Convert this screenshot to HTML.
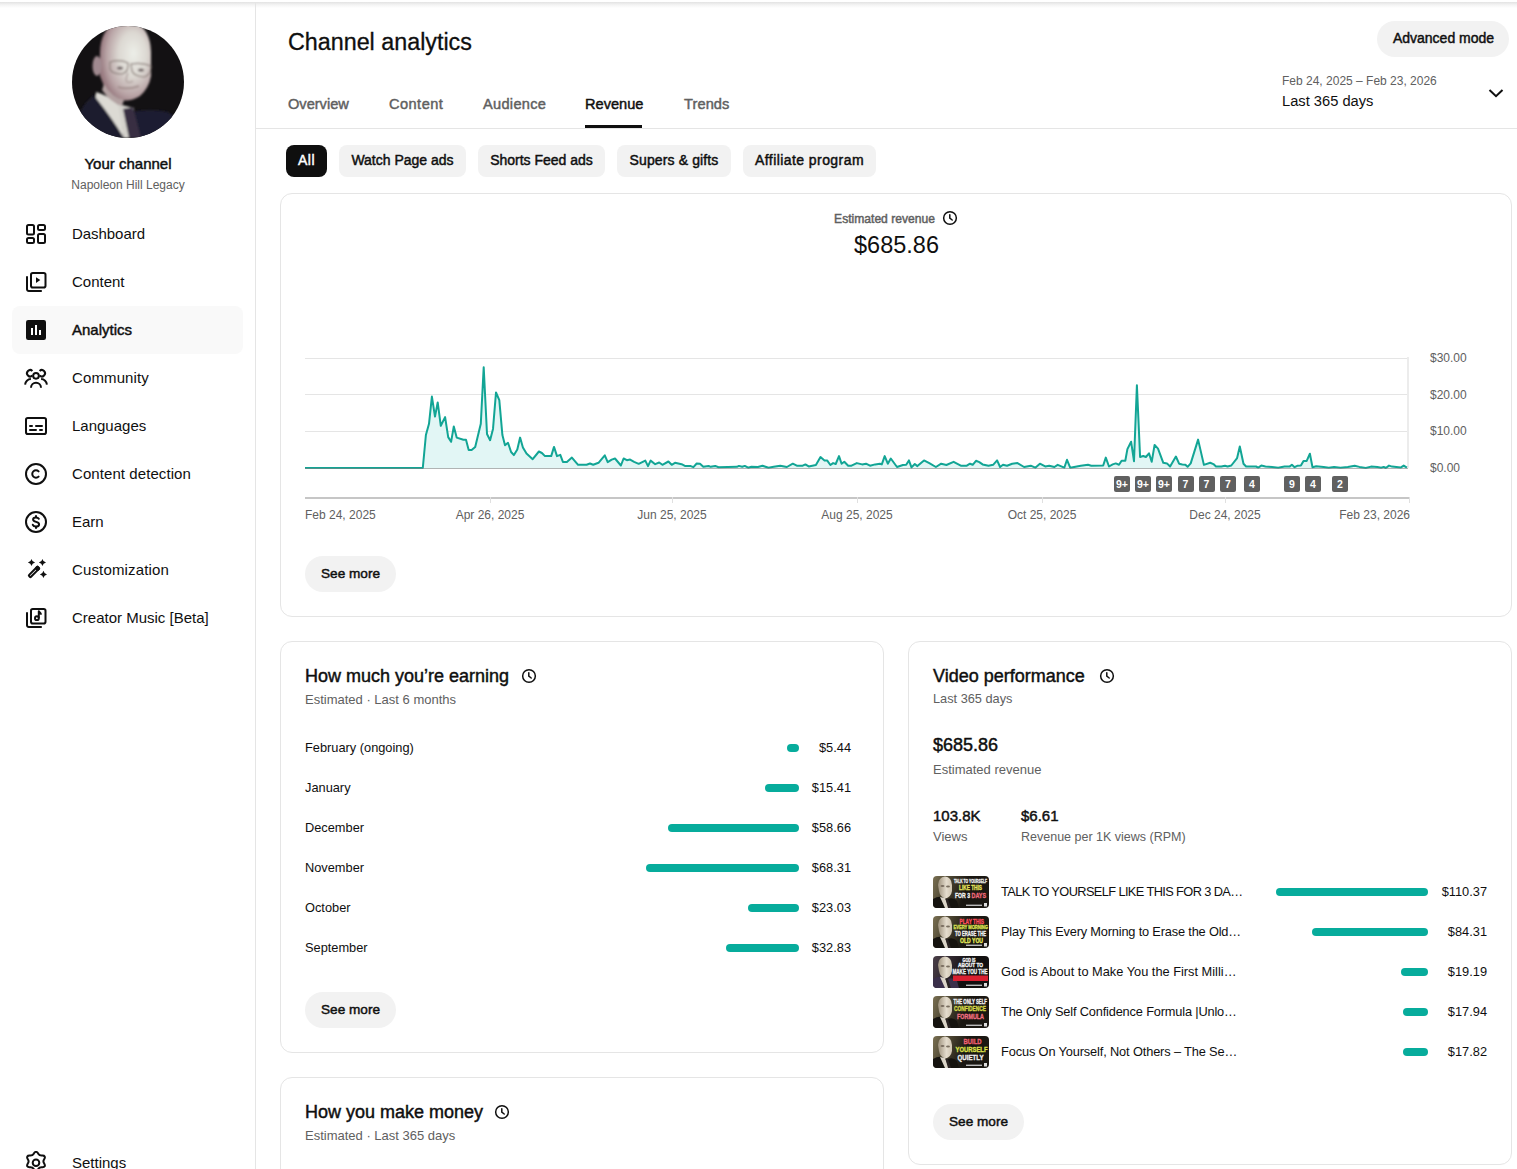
<!DOCTYPE html>
<html><head><meta charset="utf-8">
<style>
html,body{margin:0;padding:0;background:#fff;}
body{width:1517px;height:1169px;overflow:hidden;position:relative;font-family:"Liberation Sans",sans-serif;color:#0f0f0f;}
.t{position:absolute;white-space:nowrap;line-height:1;font-variant-ligatures:none;}
.ic{position:absolute;display:block;}
.abs{position:absolute;}
.card{position:absolute;border:1px solid #e5e5e5;border-radius:12px;box-sizing:border-box;background:#fff;}
.pill{position:absolute;background:#f2f2f2;border-radius:18px;}
.chip{position:absolute;background:#f2f2f2;border-radius:8px;height:32px;top:145px;}
.bar{position:absolute;height:8px;border-radius:4px;background:#07ac9c;}
.mk{position:absolute;top:475.5px;width:16px;height:16px;border-radius:2px;background:#606060;color:#fff;font-size:10.5px;font-weight:700;line-height:16px;text-align:center;}
</style></head><body>
<div class="abs" style="left:0;top:2px;width:1517px;height:6px;background:linear-gradient(#e2e2e2,#f3f3f3 45%,rgba(255,255,255,0))"></div>
<div class="abs" style="left:255px;top:2px;width:1px;height:1167px;background:#e5e5e5"></div>
<svg class="ic" style="left:72px;top:26px" width="112" height="112" viewBox="0 0 112 112">
<defs><clipPath id="av"><circle cx="56" cy="56" r="56"/></clipPath>
<radialGradient id="skin" cx="0.62" cy="0.45" r="0.62" fx="0.66" fy="0.4"><stop offset="0" stop-color="#eceee8"/><stop offset="0.45" stop-color="#dcd8d2"/><stop offset="0.8" stop-color="#b9a4a6"/><stop offset="1" stop-color="#97797f"/></radialGradient>
<filter id="bl" x="-0.2" y="-0.2" width="1.4" height="1.4"><feGaussianBlur stdDeviation="0.9"/></filter>
</defs>
<g clip-path="url(#av)">
<rect width="112" height="112" fill="#131113"/>
<g filter="url(#bl)">
<path d="M4 112 L8 86 Q14 74 24 68 L34 70 L56 112Z" fill="#1e1d2e"/>
<path d="M60 86 Q78 82 96 86 L112 98 L112 112 L56 112Z" fill="#1f1e30"/>
<path d="M24 66 Q34 68 48 80 L52 112 Q40 92 24 72Z" fill="#dcdad4"/>
<path d="M46 78 L62 82 L58 112 L52 112Z" fill="#d4d2cc"/>
<path d="M51 83 L61 81 L69 112 L57 112Z" fill="#382f42"/>
<path d="M28 26 Q29 -3 53 -5 Q78 -4 79 26 L79 50 Q77 62 68 70 Q58 76 50 74 Q38 70 32 60 L28 50Z" fill="url(#skin)"/>
<ellipse cx="25" cy="40" rx="4.5" ry="10" fill="#a08a90"/>
<path d="M38 36 Q48 33 56 37 Q57 46 50 48 Q40 48 38 43Z M59 38 Q70 36 79 40 Q79 49 72 51 Q62 50 60 45Z" fill="none" stroke="#8a7d78" stroke-width="1.2"/>
<ellipse cx="48" cy="42" rx="3" ry="1.5" fill="#6b5e60"/><ellipse cx="69" cy="44" rx="3" ry="1.5" fill="#6b5e60"/>
<path d="M56 47 Q53 54 55 56 Q58 57 61 55" fill="none" stroke="#a89896" stroke-width="1.2"/>
<path d="M46 61 Q56 64 67 60" fill="none" stroke="#9a8684" stroke-width="1.5"/>
<path d="M32 58 Q40 72 52 74 L50 80 Q38 76 30 64Z" fill="#b3a2a2"/>
</g>
</g></svg>
<div class="t" style="left:-172px;width:600px;text-align:center;top:156.00px;font-size:15px;font-weight:400;-webkit-text-stroke:0.45px #0f0f0f;color:#0f0f0f;">Your channel</div>
<div class="t" style="left:-172px;width:600px;text-align:center;top:179.34px;font-size:12px;font-weight:400;color:#606060;">Napoleon Hill Legacy</div>
<div class="abs" style="left:12px;top:306px;width:231px;height:48px;border-radius:8px;background:#f9f9f9"></div>
<svg class="ic" style="left:24px;top:222px" width="24" height="24" viewBox="0 0 24 24" fill="none" stroke="#0f0f0f" stroke-width="2"><rect x="3" y="3" width="7" height="9.5" rx="1.5"/><rect x="14" y="3" width="7" height="5" rx="1.5"/><rect x="3" y="16" width="7" height="5" rx="1.5"/><rect x="14" y="12" width="7" height="9" rx="1.5"/></svg>
<div class="t" style="left:72px;top:226.30px;font-size:15px;font-weight:400;color:#0f0f0f;letter-spacing:-0.05px;">Dashboard</div>
<svg class="ic" style="left:24px;top:270px" width="24" height="24" viewBox="0 0 24 24" fill="none" stroke="#0f0f0f" stroke-width="2"><rect x="7" y="3" width="14.5" height="14.5" rx="1.8"/><path d="M3 6.2V19.2a1.8 1.8 0 0 0 1.8 1.8H17.8"/><path d="M12 7.2L16.3 10.1L12 13Z" fill="#0f0f0f" stroke="none"/></svg>
<div class="t" style="left:72px;top:274.30px;font-size:15px;font-weight:400;color:#0f0f0f;letter-spacing:0px;">Content</div>
<svg class="ic" style="left:24px;top:318px" width="24" height="24" viewBox="0 0 24 24" fill="none" stroke="#0f0f0f" stroke-width="2"><rect x="2" y="2" width="20" height="20" rx="2.2" fill="#0f0f0f" stroke="none"/><rect x="7" y="10" width="2" height="7" fill="#fff" stroke="none"/><rect x="11" y="7" width="2" height="10" fill="#fff" stroke="none"/><rect x="15" y="12" width="2" height="5" fill="#fff" stroke="none"/></svg>
<div class="t" style="left:72px;top:322.30px;font-size:15px;font-weight:400;-webkit-text-stroke:0.45px #0f0f0f;color:#0f0f0f;letter-spacing:0px;">Analytics</div>
<svg class="ic" style="left:24px;top:366px" width="24" height="24" viewBox="0 0 24 24" fill="none" stroke="#0f0f0f" stroke-width="2"><circle cx="12" cy="9.8" r="2.85"/><path d="M7 21.8a5 5 0 0 1 10 0"/><path d="M8.4 4.9A3.2 3.2 0 1 0 8.4 9.6"/><path d="M15.6 4.9A3.2 3.2 0 1 1 15.6 9.6"/><path d="M1.1 18.6a5.8 5.8 0 0 1 5.8 -5.5"/><path d="M22.9 18.6a5.8 5.8 0 0 0 -5.8 -5.5"/></svg>
<div class="t" style="left:72px;top:370.30px;font-size:15px;font-weight:400;color:#0f0f0f;letter-spacing:0.12px;">Community</div>
<svg class="ic" style="left:24px;top:414px" width="24" height="24" viewBox="0 0 24 24" fill="none" stroke="#0f0f0f" stroke-width="2"><rect x="2" y="4" width="20" height="16" rx="1.8"/><path d="M6 12H8M12 12H18M6 16H12M16 16H18" stroke-linecap="round"/></svg>
<div class="t" style="left:72px;top:418.30px;font-size:15px;font-weight:400;color:#0f0f0f;letter-spacing:0px;">Languages</div>
<svg class="ic" style="left:24px;top:462px" width="24" height="24" viewBox="0 0 24 24" fill="none" stroke="#0f0f0f" stroke-width="2"><circle cx="12" cy="12" r="10"/><path d="M14.6 9.4a3.7 3.7 0 1 0 0 5.2" stroke-linecap="round"/></svg>
<div class="t" style="left:72px;top:466.30px;font-size:15px;font-weight:400;color:#0f0f0f;letter-spacing:0.08px;">Content detection</div>
<svg class="ic" style="left:24px;top:510px" width="24" height="24" viewBox="0 0 24 24" fill="none" stroke="#0f0f0f" stroke-width="2"><circle cx="12" cy="12" r="10"/><path d="M12 5.2V7.5M12 16.6V18.8" /><path d="M14.8 8.8c-0.5-0.9-1.6-1.4-2.9-1.4c-1.7 0-2.8 0.9-2.8 2.2c0 3 6 1.6 6 4.6c0 1.4-1.3 2.4-3.1 2.4c-1.5 0-2.8-0.7-3.2-1.8" stroke-linecap="round"/></svg>
<div class="t" style="left:72px;top:514.30px;font-size:15px;font-weight:400;color:#0f0f0f;letter-spacing:0px;">Earn</div>
<svg class="ic" style="left:24px;top:558px" width="24" height="24" viewBox="0 0 24 24" fill="none" stroke="#0f0f0f" stroke-width="2"><path d="M7.5 0.9000000000000004Q8.07 3.8800000000000003 11.05 4.45Q8.07 5.0200000000000005 7.5 8.0Q6.93 5.0200000000000005 3.95 4.45Q6.93 3.8800000000000003 7.5 0.9000000000000004ZM18.45 0.9000000000000004Q19.02 3.8800000000000003 22.0 4.45Q19.02 5.0200000000000005 18.45 8.0Q17.88 5.0200000000000005 14.899999999999999 4.45Q17.88 3.8800000000000003 18.45 0.9000000000000004ZM19.45 12.849999999999998Q20.02 15.829999999999998 23.0 16.4Q20.02 16.97 19.45 19.95Q18.88 16.97 15.899999999999999 16.4Q18.88 15.829999999999998 19.45 12.849999999999998Z" fill="#0f0f0f" stroke="none"/><g transform="translate(9.9 14) rotate(-45)"><rect x="-6.3" y="-1.35" width="12.6" height="2.7" rx="0.9"/><rect x="3" y="-2.3" width="4.35" height="4.6" rx="1.2" fill="#0f0f0f" stroke="none"/></g></svg>
<div class="t" style="left:72px;top:562.30px;font-size:15px;font-weight:400;color:#0f0f0f;letter-spacing:0.15px;">Customization</div>
<svg class="ic" style="left:24px;top:606px" width="24" height="24" viewBox="0 0 24 24" fill="none" stroke="#0f0f0f" stroke-width="2"><rect x="7" y="3" width="14.5" height="14.5" rx="1.8"/><path d="M3 6.2V19.2a1.8 1.8 0 0 0 1.8 1.8H17.8"/><circle cx="12.9" cy="12.2" r="1.9"/><path d="M14.8 12.2V5.3c0.6 0.6 2 1.4 2.3 3.3" stroke-linejoin="round"/></svg>
<div class="t" style="left:72px;top:610.30px;font-size:15px;font-weight:400;color:#0f0f0f;letter-spacing:0px;">Creator Music [Beta]</div>
<svg class="ic" style="left:24px;top:1151px" width="24" height="24" viewBox="0 0 24 24" fill="none" stroke="#0f0f0f" stroke-width="2"><g transform="translate(12 11.7) scale(1.1) translate(-12 -11.7)" stroke-width="1.82"><path d="M12 1.8c1.2 0 1.6 1 2.2 2c0.6 1 1.6 1.4 2.8 1.4c1.2 0 2.3-0.3 2.9 0.8c0.6 1 -0.1 2-0.7 3c-0.6 1-0.6 2 0 3c0.6 1 1.3 2 0.7 3c-0.6 1.1-1.7 0.8-2.9 0.8c-1.2 0-2.2 0.4-2.8 1.4c-0.6 1-1 2-2.2 2c-1.2 0-1.6-1-2.2-2c-0.6-1-1.6-1.4-2.8-1.4c-1.2 0-2.3 0.3-2.9-0.8c-0.6-1 0.1-2 0.7-3c0.6-1 0.6-2 0-3c-0.6-1-1.3-2-0.7-3c0.6-1.1 1.7-0.8 2.9-0.8c1.2 0 2.2-0.4 2.8-1.4c0.6-1 1-2 2.2-2Z" stroke-linejoin="round"/><circle cx="12" cy="11.7" r="3"/></g></svg>
<div class="t" style="left:72px;top:1155.00px;font-size:15px;font-weight:400;color:#0f0f0f;">Settings</div>
<div class="t" style="left:288px;top:31.28px;font-size:23.3px;font-weight:400;color:#0f0f0f;-webkit-text-stroke:0.3px #0f0f0f;">Channel analytics</div>
<div class="t" style="left:288px;top:96.94px;font-size:14.6px;font-weight:400;-webkit-text-stroke:0.45px #606060;color:#606060;letter-spacing:0px;">Overview</div>
<div class="t" style="left:389px;top:96.94px;font-size:14.6px;font-weight:400;-webkit-text-stroke:0.45px #606060;color:#606060;letter-spacing:0.45px;">Content</div>
<div class="t" style="left:483px;top:96.94px;font-size:14.6px;font-weight:400;-webkit-text-stroke:0.45px #606060;color:#606060;letter-spacing:0.3px;">Audience</div>
<div class="t" style="left:585px;top:96.94px;font-size:14.6px;font-weight:400;-webkit-text-stroke:0.45px #0f0f0f;color:#0f0f0f;letter-spacing:0px;">Revenue</div>
<div class="t" style="left:684px;top:96.94px;font-size:14.6px;font-weight:400;-webkit-text-stroke:0.45px #606060;color:#606060;letter-spacing:0.1px;">Trends</div>
<div class="abs" style="left:585px;top:125px;width:57px;height:3px;background:#0f0f0f"></div>
<div class="abs" style="left:256px;top:128px;width:1261px;height:1px;background:#e5e5e5"></div>
<div class="pill" style="left:1377px;top:21px;width:132px;height:36px"></div>
<div class="t" style="left:1143.5px;width:600px;text-align:center;top:30.85px;font-size:14px;font-weight:400;-webkit-text-stroke:0.45px #0f0f0f;color:#0f0f0f;">Advanced mode</div>
<div class="t" style="left:1282px;top:74.54px;font-size:12px;font-weight:400;color:#606060;">Feb 24, 2025 – Feb 23, 2026</div>
<div class="t" style="left:1282px;top:93.76px;font-size:14.7px;font-weight:400;color:#0f0f0f;">Last 365 days</div>
<svg class="ic" style="left:1484px;top:81px" width="24" height="24" viewBox="0 0 24 24" fill="none" stroke="#0f0f0f" stroke-width="2"><path d="M5.5 9L12 15.2L18.5 9"/></svg>
<div class="chip" style="left:286px;width:41px;background:#0f0f0f"></div>
<div class="t" style="left:6.5px;width:600px;text-align:center;top:153.05px;font-size:14px;font-weight:400;-webkit-text-stroke:0.45px #fff;color:#fff;letter-spacing:0.5px;">All</div>
<div class="chip" style="left:339px;width:127px;background:#f2f2f2"></div>
<div class="t" style="left:102.5px;width:600px;text-align:center;top:153.05px;font-size:14px;font-weight:400;-webkit-text-stroke:0.45px #0f0f0f;color:#0f0f0f;letter-spacing:0px;">Watch Page ads</div>
<div class="chip" style="left:478px;width:127px;background:#f2f2f2"></div>
<div class="t" style="left:241.5px;width:600px;text-align:center;top:153.05px;font-size:14px;font-weight:400;-webkit-text-stroke:0.45px #0f0f0f;color:#0f0f0f;letter-spacing:0px;">Shorts Feed ads</div>
<div class="chip" style="left:617px;width:114px;background:#f2f2f2"></div>
<div class="t" style="left:374.0px;width:600px;text-align:center;top:153.05px;font-size:14px;font-weight:400;-webkit-text-stroke:0.45px #0f0f0f;color:#0f0f0f;letter-spacing:0.13px;">Supers &amp; gifts</div>
<div class="chip" style="left:743px;width:133px;background:#f2f2f2"></div>
<div class="t" style="left:509.5px;width:600px;text-align:center;top:153.05px;font-size:14px;font-weight:400;-webkit-text-stroke:0.45px #0f0f0f;color:#0f0f0f;letter-spacing:0.43px;">Affiliate program</div>
<div class="card" style="left:280px;top:193px;width:1232px;height:424px"></div>
<div class="t" style="left:584.5px;width:600px;text-align:center;top:212.56px;font-size:12.1px;font-weight:400;-webkit-text-stroke:0.45px #606060;color:#606060;">Estimated revenue</div>
<svg class="ic" style="left:942px;top:210.1px" width="16" height="16" viewBox="0 0 16 16" fill="none" stroke="#0f0f0f" stroke-width="1.5"><circle cx="8" cy="8" r="6.35"/><path d="M7.8 4.7V8.2L10.2 10" stroke-linecap="round"/></svg>
<div class="t" style="left:596.5px;width:600px;text-align:center;top:233.81px;font-size:23.5px;font-weight:400;color:#0f0f0f;">$685.86</div>
<div class="abs" style="left:305px;top:358px;width:1103px;height:1px;background:#e5e5e5"></div>
<div class="abs" style="left:305px;top:394px;width:1103px;height:1px;background:#e5e5e5"></div>
<div class="abs" style="left:305px;top:431px;width:1103px;height:1px;background:#e5e5e5"></div>
<div class="abs" style="left:1407px;top:357px;width:2px;height:111px;background:#ececec"></div>
<svg class="ic" style="left:0;top:0" width="1517" height="520" viewBox="0 0 1517 520"><path d="M305.0 468.0 L422.8 468.0 L425.9 435.0 L429.0 423.8 L431.9 396.6 L435.0 416.6 L437.7 402.4 L440.8 425.8 L445.1 417.1 L448.2 437.1 L451.1 441.8 L453.8 426.4 L456.7 437.6 L463.4 439.7 L466.0 439.7 L468.7 450.0 L471.6 450.0 L475.2 446.9 L480.8 423.8 L483.7 367.3 L487.0 434.0 L490.1 440.2 L493.0 428.9 L496.0 392.5 L499.3 400.2 L502.4 435.1 L505.0 445.3 L508.0 442.8 L511.1 452.0 L513.9 455.1 L517.3 449.5 L520.1 437.6 L522.9 447.4 L526.5 453.6 L532.7 459.2 L538.9 451.5 L541.9 453.0 L545.0 456.1 L551.2 456.1 L554.0 446.9 L557.0 456.1 L560.3 454.9 L562.9 461.9 L566.9 461.9 L571.9 457.6 L578.1 464.8 L586.6 464.8 L590.0 463.5 L593.2 464.8 L598.5 462.8 L604.8 455.3 L607.7 462.2 L611.7 459.6 L615.0 458.5 L620.9 465.5 L623.6 458.5 L626.9 460.2 L630.1 459.6 L634.1 461.9 L638.7 463.8 L645.3 460.6 L648.0 466.1 L650.6 460.6 L655.2 464.2 L659.2 462.5 L662.4 464.8 L668.4 461.5 L671.7 464.8 L675.0 462.8 L681.6 464.2 L684.9 465.9 L690.8 466.1 L693.4 467.2 L696.7 463.5 L700.0 463.8 L703.3 466.8 L708.6 465.9 L710.6 466.8 L715.2 465.9 L718.5 467.2 L736.9 466.8 L738.9 465.9 L742.2 466.8 L744.8 465.9 L748.1 467.7 L751.4 466.8 L757.9 467.0 L762.5 465.7 L768.5 467.7 L773.7 466.8 L780.3 465.7 L786.9 467.0 L792.8 463.7 L796.8 465.7 L802.7 465.7 L805.4 464.4 L808.7 466.4 L815.9 465.0 L820.5 457.1 L824.5 460.4 L827.1 460.4 L830.4 465.0 L833.1 463.1 L835.7 464.0 L839.0 456.1 L841.6 463.7 L844.3 461.8 L848.2 465.7 L851.5 465.7 L856.8 463.1 L862.1 464.4 L866.0 463.7 L870.0 465.7 L875.2 464.4 L879.9 463.7 L881.8 464.4 L884.7 456.1 L887.8 463.7 L890.8 458.5 L897.0 467.0 L902.9 465.0 L906.2 464.8 L908.9 460.4 L911.5 467.4 L914.8 464.0 L917.4 466.1 L924.0 460.4 L929.3 463.1 L935.9 467.0 L941.2 463.7 L946.4 465.0 L953.6 461.8 L960.8 465.7 L966.8 465.7 L970.0 463.7 L972.7 464.8 L976.0 460.8 L979.3 462.1 L982.6 464.4 L988.5 465.7 L993.1 464.8 L997.1 460.4 L1000.1 467.0 L1003.0 464.8 L1007.0 465.7 L1012.2 463.7 L1017.5 463.1 L1024.1 467.0 L1030.7 465.7 L1035.3 467.7 L1039.9 463.7 L1045.2 466.4 L1049.2 465.7 L1054.4 467.0 L1057.7 464.8 L1064.3 467.7 L1067.0 459.8 L1070.2 467.7 L1076.8 466.4 L1080.8 465.7 L1088.0 464.8 L1091.3 465.7 L1103.2 465.5 L1105.8 457.6 L1109.0 466.5 L1112.7 464.4 L1115.8 463.4 L1119.0 464.7 L1121.6 460.7 L1125.3 460.7 L1127.4 449.1 L1131.1 441.7 L1134.0 461.2 L1136.9 385.3 L1140.1 457.0 L1143.2 456.0 L1145.9 457.0 L1149.0 453.3 L1151.7 461.8 L1154.6 444.9 L1158.0 448.6 L1163.3 462.8 L1167.0 463.4 L1170.1 466.5 L1175.9 456.5 L1179.1 463.7 L1182.3 464.4 L1185.4 464.7 L1187.6 466.8 L1190.7 463.4 L1198.1 439.6 L1203.9 464.9 L1210.2 462.8 L1213.4 464.1 L1216.0 466.5 L1221.3 466.5 L1225.0 465.8 L1227.6 466.5 L1231.3 465.5 L1237.1 458.1 L1239.8 446.5 L1243.5 463.7 L1246.1 466.5 L1256.1 466.5 L1258.2 467.6 L1261.3 465.6 L1265.5 466.4 L1271.9 466.9 L1278.2 467.7 L1284.5 466.6 L1289.8 466.4 L1291.9 464.8 L1294.6 467.2 L1297.2 465.8 L1300.9 465.6 L1303.5 460.9 L1306.7 460.9 L1309.9 453.7 L1312.5 467.2 L1316.2 466.2 L1323.6 466.9 L1328.8 467.7 L1334.1 466.9 L1340.4 467.7 L1347.8 466.9 L1354.7 465.8 L1359.4 466.9 L1365.8 468.0 L1371.0 466.6 L1377.4 466.9 L1381.1 467.7 L1383.7 466.9 L1385.8 468.0 L1389.0 465.6 L1392.1 466.6 L1400.6 467.6 L1403.7 465.6 L1406.9 467.6 L1406.9 468 L305 468 Z" fill="#e2f6f5"/><path d="M305.0 468.0 L422.8 468.0 L425.9 435.0 L429.0 423.8 L431.9 396.6 L435.0 416.6 L437.7 402.4 L440.8 425.8 L445.1 417.1 L448.2 437.1 L451.1 441.8 L453.8 426.4 L456.7 437.6 L463.4 439.7 L466.0 439.7 L468.7 450.0 L471.6 450.0 L475.2 446.9 L480.8 423.8 L483.7 367.3 L487.0 434.0 L490.1 440.2 L493.0 428.9 L496.0 392.5 L499.3 400.2 L502.4 435.1 L505.0 445.3 L508.0 442.8 L511.1 452.0 L513.9 455.1 L517.3 449.5 L520.1 437.6 L522.9 447.4 L526.5 453.6 L532.7 459.2 L538.9 451.5 L541.9 453.0 L545.0 456.1 L551.2 456.1 L554.0 446.9 L557.0 456.1 L560.3 454.9 L562.9 461.9 L566.9 461.9 L571.9 457.6 L578.1 464.8 L586.6 464.8 L590.0 463.5 L593.2 464.8 L598.5 462.8 L604.8 455.3 L607.7 462.2 L611.7 459.6 L615.0 458.5 L620.9 465.5 L623.6 458.5 L626.9 460.2 L630.1 459.6 L634.1 461.9 L638.7 463.8 L645.3 460.6 L648.0 466.1 L650.6 460.6 L655.2 464.2 L659.2 462.5 L662.4 464.8 L668.4 461.5 L671.7 464.8 L675.0 462.8 L681.6 464.2 L684.9 465.9 L690.8 466.1 L693.4 467.2 L696.7 463.5 L700.0 463.8 L703.3 466.8 L708.6 465.9 L710.6 466.8 L715.2 465.9 L718.5 467.2 L736.9 466.8 L738.9 465.9 L742.2 466.8 L744.8 465.9 L748.1 467.7 L751.4 466.8 L757.9 467.0 L762.5 465.7 L768.5 467.7 L773.7 466.8 L780.3 465.7 L786.9 467.0 L792.8 463.7 L796.8 465.7 L802.7 465.7 L805.4 464.4 L808.7 466.4 L815.9 465.0 L820.5 457.1 L824.5 460.4 L827.1 460.4 L830.4 465.0 L833.1 463.1 L835.7 464.0 L839.0 456.1 L841.6 463.7 L844.3 461.8 L848.2 465.7 L851.5 465.7 L856.8 463.1 L862.1 464.4 L866.0 463.7 L870.0 465.7 L875.2 464.4 L879.9 463.7 L881.8 464.4 L884.7 456.1 L887.8 463.7 L890.8 458.5 L897.0 467.0 L902.9 465.0 L906.2 464.8 L908.9 460.4 L911.5 467.4 L914.8 464.0 L917.4 466.1 L924.0 460.4 L929.3 463.1 L935.9 467.0 L941.2 463.7 L946.4 465.0 L953.6 461.8 L960.8 465.7 L966.8 465.7 L970.0 463.7 L972.7 464.8 L976.0 460.8 L979.3 462.1 L982.6 464.4 L988.5 465.7 L993.1 464.8 L997.1 460.4 L1000.1 467.0 L1003.0 464.8 L1007.0 465.7 L1012.2 463.7 L1017.5 463.1 L1024.1 467.0 L1030.7 465.7 L1035.3 467.7 L1039.9 463.7 L1045.2 466.4 L1049.2 465.7 L1054.4 467.0 L1057.7 464.8 L1064.3 467.7 L1067.0 459.8 L1070.2 467.7 L1076.8 466.4 L1080.8 465.7 L1088.0 464.8 L1091.3 465.7 L1103.2 465.5 L1105.8 457.6 L1109.0 466.5 L1112.7 464.4 L1115.8 463.4 L1119.0 464.7 L1121.6 460.7 L1125.3 460.7 L1127.4 449.1 L1131.1 441.7 L1134.0 461.2 L1136.9 385.3 L1140.1 457.0 L1143.2 456.0 L1145.9 457.0 L1149.0 453.3 L1151.7 461.8 L1154.6 444.9 L1158.0 448.6 L1163.3 462.8 L1167.0 463.4 L1170.1 466.5 L1175.9 456.5 L1179.1 463.7 L1182.3 464.4 L1185.4 464.7 L1187.6 466.8 L1190.7 463.4 L1198.1 439.6 L1203.9 464.9 L1210.2 462.8 L1213.4 464.1 L1216.0 466.5 L1221.3 466.5 L1225.0 465.8 L1227.6 466.5 L1231.3 465.5 L1237.1 458.1 L1239.8 446.5 L1243.5 463.7 L1246.1 466.5 L1256.1 466.5 L1258.2 467.6 L1261.3 465.6 L1265.5 466.4 L1271.9 466.9 L1278.2 467.7 L1284.5 466.6 L1289.8 466.4 L1291.9 464.8 L1294.6 467.2 L1297.2 465.8 L1300.9 465.6 L1303.5 460.9 L1306.7 460.9 L1309.9 453.7 L1312.5 467.2 L1316.2 466.2 L1323.6 466.9 L1328.8 467.7 L1334.1 466.9 L1340.4 467.7 L1347.8 466.9 L1354.7 465.8 L1359.4 466.9 L1365.8 468.0 L1371.0 466.6 L1377.4 466.9 L1381.1 467.7 L1383.7 466.9 L1385.8 468.0 L1389.0 465.6 L1392.1 466.6 L1400.6 467.6 L1403.7 465.6 L1406.9 467.6" fill="none" stroke="#12a595" stroke-width="2" stroke-linejoin="round"/><path d="M305 468.5H1408" stroke="#7d8383" stroke-width="1" opacity="0.6"/></svg>
<div class="t" style="left:1430px;top:351.94px;font-size:12px;font-weight:400;color:#606060;">$30.00</div>
<div class="t" style="left:1430px;top:388.54px;font-size:12px;font-weight:400;color:#606060;">$20.00</div>
<div class="t" style="left:1430px;top:425.04px;font-size:12px;font-weight:400;color:#606060;">$10.00</div>
<div class="t" style="left:1430px;top:462.04px;font-size:12px;font-weight:400;color:#606060;">$0.00</div>
<div class="abs" style="left:305px;top:497px;width:1105px;height:2px;background:#c6c6c6"></div>
<div class="abs" style="left:489.5px;top:497px;width:1px;height:6px;background:#e0e0e0"></div>
<div class="abs" style="left:671.5px;top:497px;width:1px;height:6px;background:#e0e0e0"></div>
<div class="abs" style="left:856.5px;top:497px;width:1px;height:6px;background:#e0e0e0"></div>
<div class="abs" style="left:1041.5px;top:497px;width:1px;height:6px;background:#e0e0e0"></div>
<div class="abs" style="left:1224.5px;top:497px;width:1px;height:6px;background:#e0e0e0"></div>
<div class="abs" style="left:1408.5px;top:497px;width:1px;height:6px;background:#e0e0e0"></div>
<div class="t" style="left:305px;top:508.74px;font-size:12px;font-weight:400;color:#606060;">Feb 24, 2025</div>
<div class="t" style="left:190px;width:600px;text-align:center;top:508.74px;font-size:12px;font-weight:400;color:#606060;">Apr 26, 2025</div>
<div class="t" style="left:372px;width:600px;text-align:center;top:508.74px;font-size:12px;font-weight:400;color:#606060;">Jun 25, 2025</div>
<div class="t" style="left:557px;width:600px;text-align:center;top:508.74px;font-size:12px;font-weight:400;color:#606060;">Aug 25, 2025</div>
<div class="t" style="left:742px;width:600px;text-align:center;top:508.74px;font-size:12px;font-weight:400;color:#606060;">Oct 25, 2025</div>
<div class="t" style="left:925px;width:600px;text-align:center;top:508.74px;font-size:12px;font-weight:400;color:#606060;">Dec 24, 2025</div>
<div class="t" style="right:107px;text-align:right;top:508.74px;font-size:12px;font-weight:400;color:#606060;">Feb 23, 2026</div>
<div class="mk" style="left:1114px">9+</div>
<div class="mk" style="left:1135px">9+</div>
<div class="mk" style="left:1156px">9+</div>
<div class="mk" style="left:1177.5px">7</div>
<div class="mk" style="left:1198.5px">7</div>
<div class="mk" style="left:1220px">7</div>
<div class="mk" style="left:1244px">4</div>
<div class="mk" style="left:1284px">9</div>
<div class="mk" style="left:1305px">4</div>
<div class="mk" style="left:1332px">2</div>
<div class="pill" style="left:305px;top:556px;width:91px;height:36px"></div>
<div class="t" style="left:50.5px;width:600px;text-align:center;top:566.69px;font-size:13.6px;font-weight:400;-webkit-text-stroke:0.45px #0f0f0f;color:#0f0f0f;">See more</div>
<div class="card" style="left:280px;top:641px;width:604px;height:412px"></div>
<div class="t" style="left:305px;top:666.86px;font-size:18px;font-weight:400;-webkit-text-stroke:0.45px #0f0f0f;color:#0f0f0f;">How much you’re earning</div>
<svg class="ic" style="left:521px;top:667.6px" width="16" height="16" viewBox="0 0 16 16" fill="none" stroke="#0f0f0f" stroke-width="1.5"><circle cx="8" cy="8" r="6.35"/><path d="M7.8 4.7V8.2L10.2 10" stroke-linecap="round"/></svg>
<div class="t" style="left:305px;top:692.80px;font-size:13px;font-weight:400;color:#606060;">Estimated · Last 6 months</div>
<div class="t" style="left:305px;top:741.66px;font-size:12.8px;font-weight:400;color:#0f0f0f;">February (ongoing)</div>
<div class="bar" style="left:787px;top:744px;width:12px"></div>
<div class="t" style="right:666px;text-align:right;top:741.66px;font-size:12.8px;font-weight:400;color:#0f0f0f;">$5.44</div>
<div class="t" style="left:305px;top:781.66px;font-size:12.8px;font-weight:400;color:#0f0f0f;">January</div>
<div class="bar" style="left:765px;top:784px;width:34px"></div>
<div class="t" style="right:666px;text-align:right;top:781.66px;font-size:12.8px;font-weight:400;color:#0f0f0f;">$15.41</div>
<div class="t" style="left:305px;top:821.66px;font-size:12.8px;font-weight:400;color:#0f0f0f;">December</div>
<div class="bar" style="left:668px;top:824px;width:131px"></div>
<div class="t" style="right:666px;text-align:right;top:821.66px;font-size:12.8px;font-weight:400;color:#0f0f0f;">$58.66</div>
<div class="t" style="left:305px;top:861.66px;font-size:12.8px;font-weight:400;color:#0f0f0f;">November</div>
<div class="bar" style="left:646px;top:864px;width:153px"></div>
<div class="t" style="right:666px;text-align:right;top:861.66px;font-size:12.8px;font-weight:400;color:#0f0f0f;">$68.31</div>
<div class="t" style="left:305px;top:901.66px;font-size:12.8px;font-weight:400;color:#0f0f0f;">October</div>
<div class="bar" style="left:748px;top:904px;width:51px"></div>
<div class="t" style="right:666px;text-align:right;top:901.66px;font-size:12.8px;font-weight:400;color:#0f0f0f;">$23.03</div>
<div class="t" style="left:305px;top:941.66px;font-size:12.8px;font-weight:400;color:#0f0f0f;">September</div>
<div class="bar" style="left:726px;top:944px;width:73px"></div>
<div class="t" style="right:666px;text-align:right;top:941.66px;font-size:12.8px;font-weight:400;color:#0f0f0f;">$32.83</div>
<div class="pill" style="left:305px;top:992px;width:91px;height:36px"></div>
<div class="t" style="left:50.5px;width:600px;text-align:center;top:1002.69px;font-size:13.6px;font-weight:400;-webkit-text-stroke:0.45px #0f0f0f;color:#0f0f0f;">See more</div>
<div class="card" style="left:908px;top:641px;width:604px;height:524px"></div>
<div class="t" style="left:933px;top:667.06px;font-size:18px;font-weight:400;-webkit-text-stroke:0.45px #0f0f0f;color:#0f0f0f;">Video performance</div>
<svg class="ic" style="left:1099px;top:667.6px" width="16" height="16" viewBox="0 0 16 16" fill="none" stroke="#0f0f0f" stroke-width="1.5"><circle cx="8" cy="8" r="6.35"/><path d="M7.8 4.7V8.2L10.2 10" stroke-linecap="round"/></svg>
<div class="t" style="left:933px;top:693.11px;font-size:12.75px;font-weight:400;color:#606060;">Last 365 days</div>
<div class="t" style="left:933px;top:736.06px;font-size:18px;font-weight:400;-webkit-text-stroke:0.45px #0f0f0f;color:#0f0f0f;">$685.86</div>
<div class="t" style="left:933px;top:763.00px;font-size:13px;font-weight:400;color:#606060;">Estimated revenue</div>
<div class="t" style="left:933px;top:808.30px;font-size:15px;font-weight:400;-webkit-text-stroke:0.45px #0f0f0f;color:#0f0f0f;">103.8K</div>
<div class="t" style="left:1021px;top:808.30px;font-size:15px;font-weight:400;-webkit-text-stroke:0.45px #0f0f0f;color:#0f0f0f;">$6.61</div>
<div class="t" style="left:933px;top:830.40px;font-size:13px;font-weight:400;color:#606060;">Views</div>
<div class="t" style="left:1021px;top:830.82px;font-size:12.5px;font-weight:400;color:#606060;">Revenue per 1K views (RPM)</div>
<svg class="ic" style="left:933px;top:876px" width="56" height="32" viewBox="0 0 56 32" font-family="Liberation Sans"><defs><clipPath id="th0"><rect width="56" height="32" rx="4"/></clipPath><linearGradient id="tg0" x1="0" y1="0" x2="1" y2="0.2"><stop offset="0" stop-color="#7a7052"/><stop offset="0.4" stop-color="#3e3828"/><stop offset="0.65" stop-color="#1a1712"/></linearGradient><linearGradient id="hf0" x1="0" y1="0" x2="1" y2="0"><stop offset="0" stop-color="#9d917c"/><stop offset="0.6" stop-color="#e4dccd"/><stop offset="1" stop-color="#cfc4b0"/></linearGradient></defs><g clip-path="url(#th0)"><rect width="56" height="32" fill="url(#tg0)"/><path d="M5 9 Q5.5 1 12 0.5 Q18.5 1 19 9 L19 15 Q18 21 12.5 22.5 Q7 21 6 15Z" fill="url(#hf0)"/><ellipse cx="9.5" cy="10" rx="2" ry="1" fill="#7a6f60"/><ellipse cx="15" cy="10.5" rx="2" ry="1" fill="#7a6f60"/><path d="M0 32 L0 23 Q5 20 9 21 L15 32Z" fill="#15130f"/><path d="M7 21 L12 22 L16 32 L12 32Z" fill="#dcd6ca"/><path d="M12.5 23 L15.5 22.5 L19 32 L15 32Z" fill="#2a2424"/><path d="M15 23 Q20 21 24 25 L26 32 L18 32Z" fill="#15130f"/><text x="21" y="6.8" font-size="5.8" font-weight="700" fill="#f0f0f0" stroke="#f0f0f0" stroke-width="0.35" textLength="33" lengthAdjust="spacingAndGlyphs">TALK TO YOURSELF</text><text x="26" y="13.8" font-size="6.8" font-weight="700" fill="#e3e25a" stroke="#e3e25a" stroke-width="0.35" textLength="23" lengthAdjust="spacingAndGlyphs">LIKE THIS</text><text x="22" y="22.2" font-size="8" font-weight="700" fill="#f4f4f4" stroke="#f4f4f4" stroke-width="0.35" textLength="15" lengthAdjust="spacingAndGlyphs">FOR 3</text><text x="38.5" y="22.2" font-size="8" font-weight="700" fill="#f06a7a" stroke="#f06a7a" stroke-width="0.35" textLength="14.5" lengthAdjust="spacingAndGlyphs">DAYS</text><rect x="33" y="28.6" width="16" height="1.4" fill="#bbb"/><rect x="51" y="27" width="3" height="3.5" fill="#ddd"/></g></svg>
<div class="t" style="left:1001px;top:885.96px;font-size:12.8px;font-weight:400;color:#0f0f0f;letter-spacing:-0.61px;">TALK TO YOURSELF LIKE THIS FOR 3 DA…</div>
<div class="bar" style="left:1276px;top:888px;width:152px"></div>
<div class="t" style="right:30px;text-align:right;top:885.66px;font-size:12.8px;font-weight:400;color:#0f0f0f;">$110.37</div>
<svg class="ic" style="left:933px;top:916px" width="56" height="32" viewBox="0 0 56 32" font-family="Liberation Sans"><defs><clipPath id="th1"><rect width="56" height="32" rx="4"/></clipPath><linearGradient id="tg1" x1="0" y1="0" x2="1" y2="0.2"><stop offset="0" stop-color="#7a7052"/><stop offset="0.4" stop-color="#3e3828"/><stop offset="0.65" stop-color="#1a1712"/></linearGradient><linearGradient id="hf1" x1="0" y1="0" x2="1" y2="0"><stop offset="0" stop-color="#9d917c"/><stop offset="0.6" stop-color="#e4dccd"/><stop offset="1" stop-color="#cfc4b0"/></linearGradient></defs><g clip-path="url(#th1)"><rect width="56" height="32" fill="url(#tg1)"/><path d="M5 9 Q5.5 1 12 0.5 Q18.5 1 19 9 L19 15 Q18 21 12.5 22.5 Q7 21 6 15Z" fill="url(#hf1)"/><ellipse cx="9.5" cy="10" rx="2" ry="1" fill="#7a6f60"/><ellipse cx="15" cy="10.5" rx="2" ry="1" fill="#7a6f60"/><path d="M0 32 L0 23 Q5 20 9 21 L15 32Z" fill="#15130f"/><path d="M7 21 L12 22 L16 32 L12 32Z" fill="#dcd6ca"/><path d="M12.5 23 L15.5 22.5 L19 32 L15 32Z" fill="#2a2424"/><path d="M15 23 Q20 21 24 25 L26 32 L18 32Z" fill="#15130f"/><text x="26.5" y="7.6" font-size="6.4" font-weight="700" fill="#ff4d5a" stroke="#ff4d5a" stroke-width="0.35" textLength="24.5" lengthAdjust="spacingAndGlyphs">PLAY THIS</text><text x="20.5" y="13.4" font-size="5.6" font-weight="700" fill="#d9e050" stroke="#d9e050" stroke-width="0.35" textLength="34.5" lengthAdjust="spacingAndGlyphs">EVERY MORNING</text><text x="22" y="20.2" font-size="6.4" font-weight="700" fill="#f0f0f0" stroke="#f0f0f0" stroke-width="0.35" textLength="31" lengthAdjust="spacingAndGlyphs">TO ERASE THE</text><text x="27" y="27" font-size="6.6" font-weight="700" fill="#e5e85a" stroke="#e5e85a" stroke-width="0.35" textLength="23" lengthAdjust="spacingAndGlyphs">OLD YOU</text><rect x="33" y="28.6" width="16" height="1.4" fill="#bbb"/><rect x="51" y="27" width="3" height="3.5" fill="#ddd"/></g></svg>
<div class="t" style="left:1001px;top:925.96px;font-size:12.8px;font-weight:400;color:#0f0f0f;letter-spacing:-0.18px;">Play This Every Morning to Erase the Old…</div>
<div class="bar" style="left:1312px;top:928px;width:116px"></div>
<div class="t" style="right:30px;text-align:right;top:925.66px;font-size:12.8px;font-weight:400;color:#0f0f0f;">$84.31</div>
<svg class="ic" style="left:933px;top:956px" width="56" height="32" viewBox="0 0 56 32" font-family="Liberation Sans"><defs><clipPath id="th2"><rect width="56" height="32" rx="4"/></clipPath><linearGradient id="tg2" x1="0" y1="0" x2="1" y2="0.2"><stop offset="0" stop-color="#4a3f48"/><stop offset="0.4" stop-color="#2a2228"/><stop offset="0.65" stop-color="#121010"/></linearGradient><linearGradient id="hf2" x1="0" y1="0" x2="1" y2="0"><stop offset="0" stop-color="#9d917c"/><stop offset="0.6" stop-color="#e4dccd"/><stop offset="1" stop-color="#cfc4b0"/></linearGradient></defs><g clip-path="url(#th2)"><rect width="56" height="32" fill="url(#tg2)"/><path d="M5 9 Q5.5 1 12 0.5 Q18.5 1 19 9 L19 15 Q18 21 12.5 22.5 Q7 21 6 15Z" fill="url(#hf2)"/><ellipse cx="9.5" cy="10" rx="2" ry="1" fill="#7a6f60"/><ellipse cx="15" cy="10.5" rx="2" ry="1" fill="#7a6f60"/><path d="M0 32 L0 23 Q5 20 9 21 L15 32Z" fill="#3a2f4a"/><path d="M7 21 L12 22 L16 32 L12 32Z" fill="#dcd6ca"/><path d="M12.5 23 L15.5 22.5 L19 32 L15 32Z" fill="#2a2424"/><path d="M15 23 Q20 21 24 25 L26 32 L18 32Z" fill="#3a2f4a"/><rect x="20" y="19.5" width="35" height="5.5" fill="#d92030"/><text x="29.5" y="5.8" font-size="5" font-weight="700" fill="#f0f0f0" stroke="#f0f0f0" stroke-width="0.35" textLength="13" lengthAdjust="spacingAndGlyphs">GOD IS</text><text x="25" y="11.4" font-size="5.8" font-weight="700" fill="#f0f0f0" stroke="#f0f0f0" stroke-width="0.35" textLength="25" lengthAdjust="spacingAndGlyphs">ABOUT TO</text><text x="19.5" y="18" font-size="6.6" font-weight="700" fill="#f0f0f0" stroke="#f0f0f0" stroke-width="0.35" textLength="35" lengthAdjust="spacingAndGlyphs">MAKE YOU THE</text><rect x="33" y="28.6" width="16" height="1.4" fill="#bbb"/><rect x="51" y="27" width="3" height="3.5" fill="#ddd"/></g></svg>
<div class="t" style="left:1001px;top:965.96px;font-size:12.8px;font-weight:400;color:#0f0f0f;letter-spacing:0px;">God is About to Make You the First Milli…</div>
<div class="bar" style="left:1401px;top:968px;width:27px"></div>
<div class="t" style="right:30px;text-align:right;top:965.66px;font-size:12.8px;font-weight:400;color:#0f0f0f;">$19.19</div>
<svg class="ic" style="left:933px;top:996px" width="56" height="32" viewBox="0 0 56 32" font-family="Liberation Sans"><defs><clipPath id="th3"><rect width="56" height="32" rx="4"/></clipPath><linearGradient id="tg3" x1="0" y1="0" x2="1" y2="0.2"><stop offset="0" stop-color="#7a7052"/><stop offset="0.4" stop-color="#3e3828"/><stop offset="0.65" stop-color="#1a1712"/></linearGradient><linearGradient id="hf3" x1="0" y1="0" x2="1" y2="0"><stop offset="0" stop-color="#9d917c"/><stop offset="0.6" stop-color="#e4dccd"/><stop offset="1" stop-color="#cfc4b0"/></linearGradient></defs><g clip-path="url(#th3)"><rect width="56" height="32" fill="url(#tg3)"/><path d="M5 9 Q5.5 1 12 0.5 Q18.5 1 19 9 L19 15 Q18 21 12.5 22.5 Q7 21 6 15Z" fill="url(#hf3)"/><ellipse cx="9.5" cy="10" rx="2" ry="1" fill="#7a6f60"/><ellipse cx="15" cy="10.5" rx="2" ry="1" fill="#7a6f60"/><path d="M0 32 L0 23 Q5 20 9 21 L15 32Z" fill="#15130f"/><path d="M7 21 L12 22 L16 32 L12 32Z" fill="#dcd6ca"/><path d="M12.5 23 L15.5 22.5 L19 32 L15 32Z" fill="#2a2424"/><path d="M15 23 Q20 21 24 25 L26 32 L18 32Z" fill="#15130f"/><text x="20.5" y="7.6" font-size="6.6" font-weight="700" fill="#f0f0f0" stroke="#f0f0f0" stroke-width="0.35" textLength="33.5" lengthAdjust="spacingAndGlyphs">THE ONLY SELF</text><text x="21" y="15.2" font-size="7" font-weight="700" fill="#d8dc48" stroke="#d8dc48" stroke-width="0.35" textLength="32" lengthAdjust="spacingAndGlyphs">CONFIDENCE</text><text x="24" y="23.2" font-size="7.6" font-weight="700" fill="#f07080" stroke="#f07080" stroke-width="0.35" textLength="27" lengthAdjust="spacingAndGlyphs">FORMULA</text><rect x="33" y="28.6" width="16" height="1.4" fill="#bbb"/><rect x="51" y="27" width="3" height="3.5" fill="#ddd"/></g></svg>
<div class="t" style="left:1001px;top:1005.96px;font-size:12.8px;font-weight:400;color:#0f0f0f;letter-spacing:-0.17px;">The Only Self Confidence Formula |Unlo…</div>
<div class="bar" style="left:1403px;top:1008px;width:25px"></div>
<div class="t" style="right:30px;text-align:right;top:1005.66px;font-size:12.8px;font-weight:400;color:#0f0f0f;">$17.94</div>
<svg class="ic" style="left:933px;top:1036px" width="56" height="32" viewBox="0 0 56 32" font-family="Liberation Sans"><defs><clipPath id="th4"><rect width="56" height="32" rx="4"/></clipPath><linearGradient id="tg4" x1="0" y1="0" x2="1" y2="0.2"><stop offset="0" stop-color="#7a7052"/><stop offset="0.4" stop-color="#3e3828"/><stop offset="0.65" stop-color="#1a1712"/></linearGradient><linearGradient id="hf4" x1="0" y1="0" x2="1" y2="0"><stop offset="0" stop-color="#9d917c"/><stop offset="0.6" stop-color="#e4dccd"/><stop offset="1" stop-color="#cfc4b0"/></linearGradient></defs><g clip-path="url(#th4)"><rect width="56" height="32" fill="url(#tg4)"/><path d="M5 9 Q5.5 1 12 0.5 Q18.5 1 19 9 L19 15 Q18 21 12.5 22.5 Q7 21 6 15Z" fill="url(#hf4)"/><ellipse cx="9.5" cy="10" rx="2" ry="1" fill="#7a6f60"/><ellipse cx="15" cy="10.5" rx="2" ry="1" fill="#7a6f60"/><path d="M0 32 L0 23 Q5 20 9 21 L15 32Z" fill="#15130f"/><path d="M7 21 L12 22 L16 32 L12 32Z" fill="#dcd6ca"/><path d="M12.5 23 L15.5 22.5 L19 32 L15 32Z" fill="#2a2424"/><path d="M15 23 Q20 21 24 25 L26 32 L18 32Z" fill="#15130f"/><text x="30.5" y="8" font-size="7.8" font-weight="700" fill="#f06070" stroke="#f06070" stroke-width="0.35" textLength="18" lengthAdjust="spacingAndGlyphs">BUILD</text><text x="22.5" y="16" font-size="8" font-weight="700" fill="#dde14a" stroke="#dde14a" stroke-width="0.35" textLength="32" lengthAdjust="spacingAndGlyphs">YOURSELF</text><text x="24.5" y="24.2" font-size="7.6" font-weight="700" fill="#f0f0f0" stroke="#f0f0f0" stroke-width="0.35" textLength="26" lengthAdjust="spacingAndGlyphs">QUIETLY</text><rect x="33" y="28.6" width="16" height="1.4" fill="#bbb"/><rect x="51" y="27" width="3" height="3.5" fill="#ddd"/></g></svg>
<div class="t" style="left:1001px;top:1045.96px;font-size:12.8px;font-weight:400;color:#0f0f0f;letter-spacing:-0.14px;">Focus On Yourself, Not Others – The Se…</div>
<div class="bar" style="left:1403px;top:1048px;width:25px"></div>
<div class="t" style="right:30px;text-align:right;top:1045.66px;font-size:12.8px;font-weight:400;color:#0f0f0f;">$17.82</div>
<div class="pill" style="left:933px;top:1104px;width:91px;height:36px"></div>
<div class="t" style="left:678.5px;width:600px;text-align:center;top:1114.69px;font-size:13.6px;font-weight:400;-webkit-text-stroke:0.45px #0f0f0f;color:#0f0f0f;">See more</div>
<div class="card" style="left:280px;top:1077px;width:604px;height:200px"></div>
<div class="t" style="left:305px;top:1103.26px;font-size:18px;font-weight:400;-webkit-text-stroke:0.45px #0f0f0f;color:#0f0f0f;">How you make money</div>
<svg class="ic" style="left:494px;top:1103.6px" width="16" height="16" viewBox="0 0 16 16" fill="none" stroke="#0f0f0f" stroke-width="1.5"><circle cx="8" cy="8" r="6.35"/><path d="M7.8 4.7V8.2L10.2 10" stroke-linecap="round"/></svg>
<div class="t" style="left:305px;top:1128.70px;font-size:13px;font-weight:400;color:#606060;">Estimated · Last 365 days</div>
</body></html>
